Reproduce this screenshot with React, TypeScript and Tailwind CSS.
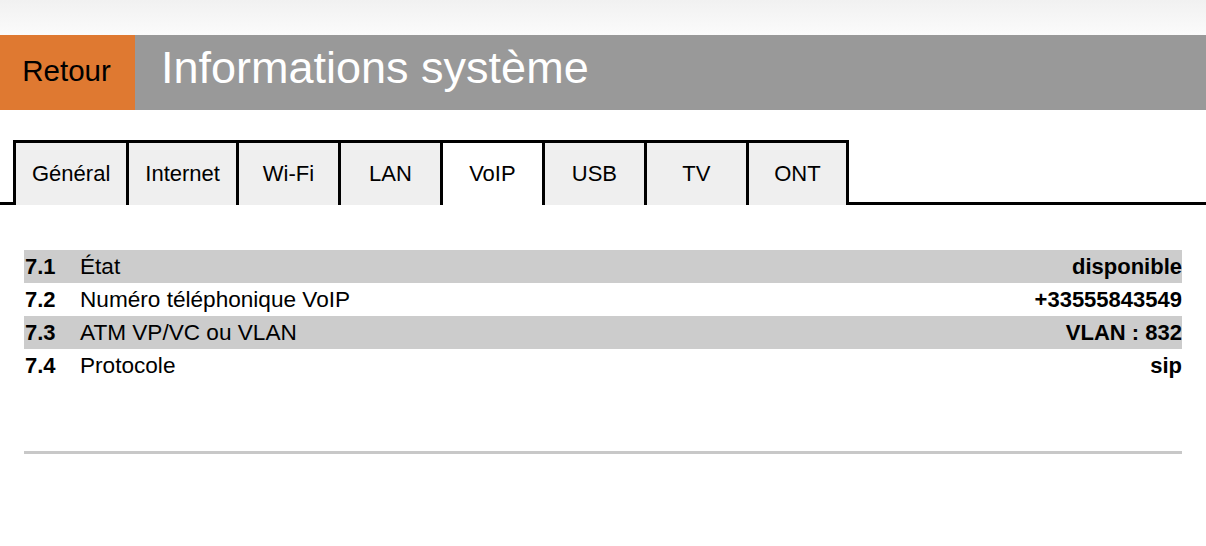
import React from 'react';

type Row = { num: string; label: string; value: string };

const tabs = ['Général', 'Internet', 'Wi-Fi', 'LAN', 'VoIP', 'USB', 'TV', 'ONT'];

const rows: Row[] = [
  { num: '7.1', label: 'État', value: 'disponible' },
  { num: '7.2', label: 'Numéro téléphonique VoIP', value: '+33555843549' },
  { num: '7.3', label: 'ATM VP/VC ou VLAN', value: 'VLAN : 832' },
  { num: '7.4', label: 'Protocole', value: 'sip' },
];

const App: React.FC = () => {
  const active = 'VoIP';

  return (
    <div className="min-h-[546px] bg-white text-black font-['Liberation_Sans',Arial,sans-serif]">
      <div className="h-[35px] bg-linear-to-b from-[#f1f1f1] to-[#fbfbfb]" />

      {/* Header */}
      <header className="flex h-[75px]">
        <button className="w-[135px] bg-[#df7931] flex items-center justify-center pb-[3px] pr-[2px] text-[29.5px] leading-none text-black">
          Retour
        </button>
        <div className="flex-1 bg-[#999999] pl-[26px] pt-[10px]">
          <h1 className="text-[45px] leading-none text-white">Informations système</h1>
        </div>
      </header>

      {/* Tabs */}
      <nav className="mt-[30px] flex items-end h-[65px] text-[22px] leading-none">
        <div className="w-[13px] border-b-[3px] border-black" />
        {tabs.map((tab, i) => (
          <button
            key={tab}
            className={`h-full min-w-[102px] px-4 flex items-center justify-center border-t-[3px] border-l-[3px] border-black ${
              i === tabs.length - 1 ? 'border-r-[3px] min-w-[103px]' : ''
            } ${tab === active ? 'bg-white' : 'bg-[#efefef]'}`}
          >
            {tab}
          </button>
        ))}
        <div className="flex-1 border-b-[3px] border-black" />
      </nav>

      {/* Table */}
      <div className="mx-[24px] mt-[45px] text-[22px]">
        {rows.map((row, i) => (
          <div key={row.num} className={`h-[33px] leading-[33px] flex items-baseline ${i % 2 === 0 ? 'bg-[#cccccc]' : ''}`}>
            <span className="w-[56px] pl-px font-bold">{row.num}</span>
            <span className="text-[22.6px]">{row.label}</span>
            <span className="ml-auto font-bold">{row.value}</span>
          </div>
        ))}
        <div className="mt-[69px] h-[3px] bg-[#c8c8c8]" />
      </div>
    </div>
  );
};

export default App;
